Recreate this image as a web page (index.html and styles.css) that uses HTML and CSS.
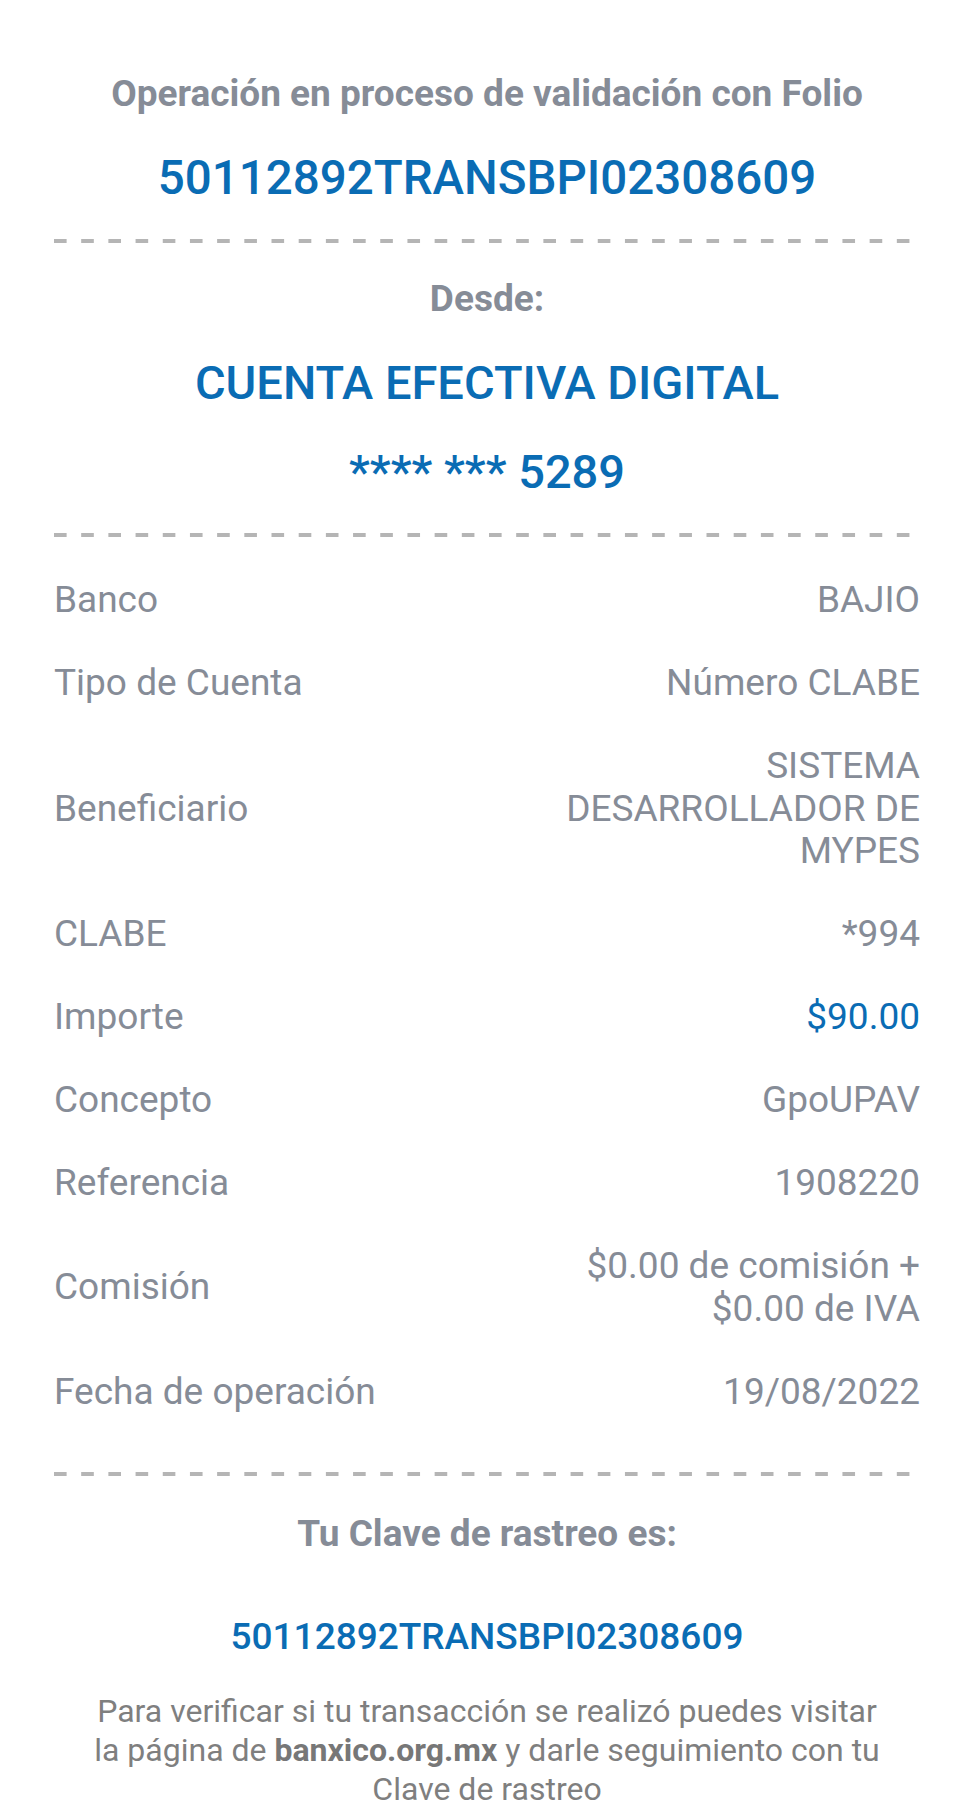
FILE: index.html
```html
<!DOCTYPE html>
<html lang="es">
<head>
<meta charset="utf-8">
<title>Comprobante</title>
<link rel="stylesheet" href="styles.css">
</head>
<body>
<main class="receipt">
  <section class="head">
    <h1 class="title">Operación en proceso de validación con Folio</h1>
    <p class="folio">50112892TRANSBPI02308609</p>
  </section>
  <div class="dash"></div>
  <section class="origin">
    <h2 class="subtitle">Desde:</h2>
    <p class="account">CUENTA EFECTIVA DIGITAL</p>
    <p class="account account-num">**** *** 5289</p>
  </section>
  <div class="dash"></div>
  <dl class="details">
    <div class="row"><dt>Banco</dt><dd>BAJIO</dd></div>
    <div class="row"><dt>Tipo de Cuenta</dt><dd>Número CLABE</dd></div>
    <div class="row"><dt>Beneficiario</dt><dd>SISTEMA DESARROLLADOR DE MYPES</dd></div>
    <div class="row"><dt>CLABE</dt><dd>*994</dd></div>
    <div class="row"><dt>Importe</dt><dd class="amount">$90.00</dd></div>
    <div class="row"><dt>Concepto</dt><dd>GpoUPAV</dd></div>
    <div class="row"><dt>Referencia</dt><dd>1908220</dd></div>
    <div class="row"><dt>Comisión</dt><dd>$0.00 de comisión + $0.00 de IVA</dd></div>
    <div class="row"><dt>Fecha de operación</dt><dd>19/08/2022</dd></div>
  </dl>
  <div class="dash dash-bottom"></div>
  <section class="tracking">
    <h2 class="subtitle">Tu Clave de rastreo es:</h2>
    <p class="track-code">50112892TRANSBPI02308609</p>
    <p class="note">Para verificar si tu transacción se realizó puedes visitar la página de <b>banxico.org.mx</b> y darle seguimiento con tu Clave de rastreo</p>
  </section>
</main>
</body>
</html>
```
FILE: styles.css
```css
* { box-sizing: border-box; }
html, body { margin: 0; padding: 0; background: #ffffff; }
body {
  font-family: Roboto, "Noto Sans", "Liberation Sans", sans-serif;
  color: #868c97;
}
.receipt {
  padding: 73px 54px 0;
}
h1, h2, p, dl, dd, dt { margin: 0; }

.head, .origin, .tracking {
  display: flex;
  flex-direction: column;
  align-items: center;
  text-align: center;
}
.title, .subtitle {
  font-size: 37px;
  line-height: 42px;
  font-weight: 700;
  color: #868c97;
}
.folio {
  margin-top: 36px;
  font-size: 47.5px;
  line-height: 54px;
  font-weight: 500;
  color: #0a6cb4;
}
.dash {
  height: 4px;
  margin: 34px 8px 0 0;
  background-image: linear-gradient(to right, #b5b5b5 13px, transparent 13px);
  background-size: 27.2px 4px;
  background-repeat: repeat-x;
}
.origin .subtitle { margin-top: 35px; }
.account {
  margin-top: 36px;
  font-size: 47px;
  line-height: 54px;
  font-weight: 500;
  color: #0a6cb4;
}
.account-num { margin-top: 35px; }

.details {
  margin-top: 22px;
  display: flex;
  flex-direction: column;
}
.row {
  display: flex;
  align-items: center;
  justify-content: space-between;
  gap: 24px;
  padding: 20.2px 0;
  font-size: 37px;
  line-height: 42.6px;
}
.row dt {
  flex: 1 1 auto;
  color: #868c97;
}
.row dd {
  max-width: 410px;
  text-align: right;
  color: #868c97;
}
.row dd.amount { color: #0a6cb4; }
.dash-bottom { margin-top: 38px; }

.tracking .subtitle { margin-top: 37px; }
.track-code {
  margin-top: 60px;
  font-size: 37px;
  line-height: 44px;
  font-weight: 500;
  color: #0a6cb4;
}
.note {
  margin-top: 33px;
  max-width: 800px;
  font-size: 32px;
  line-height: 39px;
  color: #7f7f7f;
}
.note b { font-weight: 700; color: #777777; }
```
